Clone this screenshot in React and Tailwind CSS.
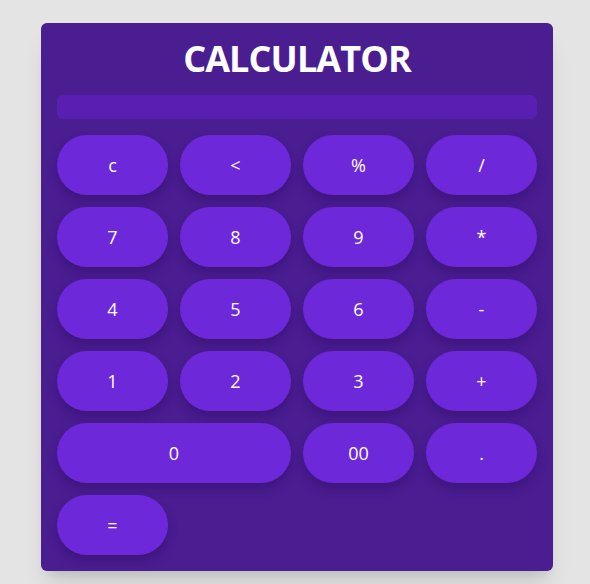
export default function App() {
  const keys = [
    { label: "c" },
    { label: "<" },
    { label: "%" },
    { label: "/" },
    { label: "7" },
    { label: "8" },
    { label: "9" },
    { label: "*" },
    { label: "4" },
    { label: "5" },
    { label: "6" },
    { label: "-" },
    { label: "1" },
    { label: "2" },
    { label: "3" },
    { label: "+" },
    { label: "0", wide: true },
    { label: "00" },
    { label: "." },
    { label: "=" },
  ];

  return (
    <div className="min-h-screen bg-[#e4e4e5] flex justify-center pt-[23px] pl-[4px] font-['Open_Sans',sans-serif]">
      <div className="w-[512px] h-[548px] bg-[#4a1d91] rounded-md shadow-xl p-4 flex flex-col">
        {/* Title */}
        <h1 className="text-[36px] leading-[40px] font-bold text-white text-center tracking-[-0.9px]">CALCULATOR</h1>

        {/* Display */}
        <div className="mt-4 h-6 rounded-md bg-[#5a1fb2]" />

        {/* Keys */}
        <div className="mt-4 grid grid-cols-4 gap-3">
          {keys.map((k) => (
            <button
              key={k.label}
              className={`h-[60px] rounded-full bg-[#6d28d9] text-white text-lg shadow-[0_6px_10px_rgba(40,10,90,0.35)] ${
                k.wide ? "col-span-2" : ""
              }`}
            >
              {k.label}
            </button>
          ))}
        </div>
      </div>
    </div>
  );
}
